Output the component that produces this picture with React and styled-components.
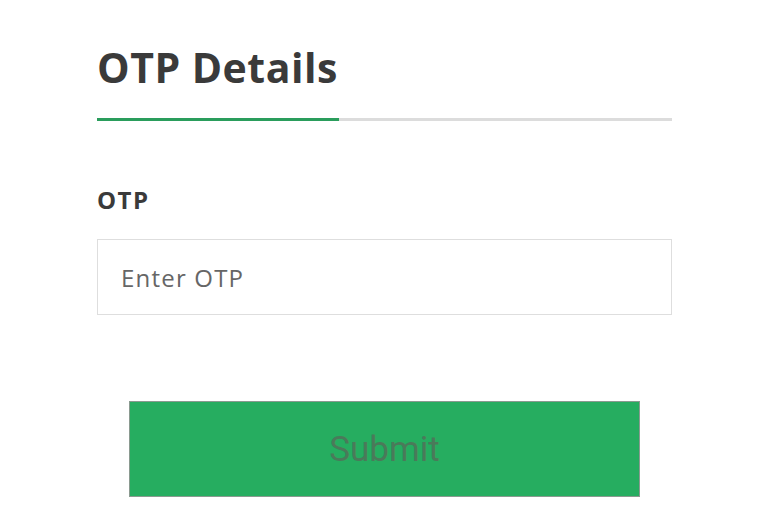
import styled, { createGlobalStyle } from "styled-components";

const GlobalStyle = createGlobalStyle`
  body {
    margin: 0;
    background: #ffffff;
    font-family: "Open Sans", "Liberation Sans", sans-serif;
  }
`

const Page = styled.div`
  width: 768px;
  height: 512px;
  overflow: hidden;
  box-sizing: border-box;
  padding: 40px 0 0 97px;
`

const Form = styled.div`
  width: 575px;
  display: flex;
  flex-direction: column;
`

const Title = styled.h1`
  margin: 0;
  font-size: 41px;
  line-height: 54px;
  font-weight: 700;
  color: #3a3a3a;
  letter-spacing: 0.5px;
`

const Progress = styled.div`
  margin-top: 24px;
  height: 3px;
  background: #dcdcdc;
  display: flex;
`

const ProgressFill = styled.div`
  height: 100%;
  background: #2a9d5c;
`

const Label = styled.label`
  margin-top: 64px;
  font-size: 24px;
  line-height: 30px;
  font-weight: 700;
  color: #3a3a3a;
  letter-spacing: 1.5px;
`

const Input = styled.input`
  margin-top: 24px;
  height: 76px;
  box-sizing: border-box;
  border: 1.5px solid #dedede;
  padding: 0 23px;
  font-family: "Open Sans", "Liberation Sans", sans-serif;
  font-size: 24px;
  letter-spacing: 1.2px;
  color: #555;
  outline: none;
  caret-color: #555;

  &::placeholder {
    color: #666;
  }
`

const SubmitButton = styled.button`
  margin: 86px auto 0;
  width: 511px;
  height: 96px;
  background: #26ad60;
  border: 1.5px solid #8a9a90;
  color: #4a7a5a;
  font-family: Roboto, "Liberation Sans", sans-serif;
  font-size: 35px;
  cursor: pointer;
`

export default function App() {
  const progress = 42
  return (
    <Page>
      <GlobalStyle />
      <Form>
        <Title>OTP Details</Title>
        <Progress>
          <ProgressFill style={{ width: `${progress}%` }} />
        </Progress>
        <Label htmlFor="otp">OTP</Label>
        <Input id="otp" placeholder="Enter OTP" autoFocus />
        <SubmitButton>Submit</SubmitButton>
      </Form>
    </Page>
  )
}
